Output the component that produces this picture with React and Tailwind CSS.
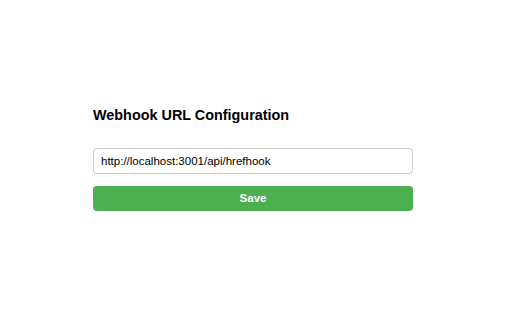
export default function App() {
  return (
    <div className="w-[512px] h-[320px] bg-white" style={{ fontFamily: '"Liberation Sans", Arial, sans-serif' }}>
      <div className="pt-[107px] pl-[93px] w-[413px] flex flex-col">
        <h2 className="text-[14.4px] leading-[17px] font-bold text-black m-0">Webhook URL Configuration</h2>
        <input
          type="text"
          defaultValue="http://localhost:3001/api/hrefhook"
          className="mt-[24px] h-[26px] w-[320px] border border-[#cccccc] rounded-[4px] px-[7px] text-[11.5px] text-black outline-none"
        />
        <button className="mt-[12px] h-[25px] w-[320px] bg-[#4caf50] rounded-[4px] text-white text-[11.5px] font-bold">
          Save
        </button>
      </div>
    </div>
  );
}
